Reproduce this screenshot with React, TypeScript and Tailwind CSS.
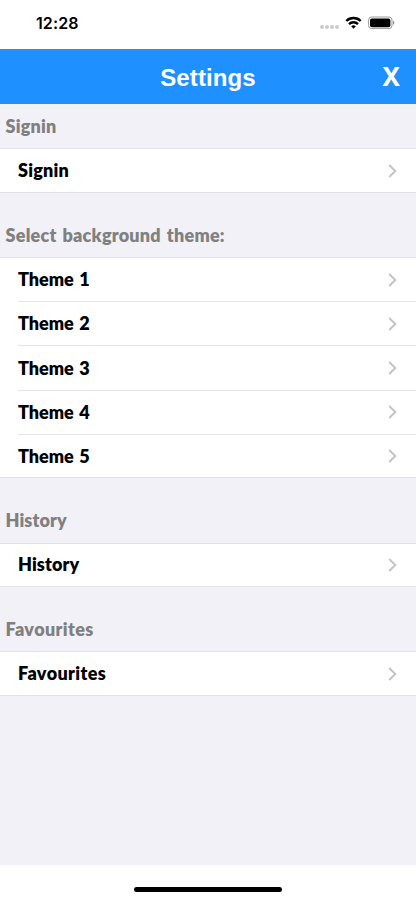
import { clsx } from "clsx";

interface SettingsSection {
  title: string;
  items: string[];
  tracking: string;
  first?: boolean;
}

const sections: SettingsSection[] = [
  { title: "Signin", items: ["Signin"], tracking: "tracking-[0.2px]", first: true },
  {
    title: "Select background theme:",
    items: ["Theme 1", "Theme 2", "Theme 3", "Theme 4", "Theme 5"],
    tracking: "tracking-[0.23px] [word-spacing:1.5px]",
  },
  { title: "History", items: ["History"], tracking: "tracking-[0.1px]" },
  { title: "Favourites", items: ["Favourites"], tracking: "tracking-[0.38px]" },
];

function StatusBar() {
  return (
    <div className="flex h-[49px] shrink-0 items-start justify-between pl-[36px] pr-[21px] pt-[13px]">
      <span className="font-[Inter,sans-serif] text-[16px] leading-[20px] font-semibold tracking-[0.1px] text-black">
        12:28
      </span>
      <div className="flex pt-[3px]">
        {/* No signal */}
        <div className="mt-[9px] flex gap-[1.4px]">
          <span className="size-[3.7px] rounded-full bg-[#cbcbcb]" />
          <span className="size-[3.7px] rounded-full bg-[#cbcbcb]" />
          <span className="size-[3.7px] rounded-full bg-[#cbcbcb]" />
          <span className="size-[3.7px] rounded-full bg-[#cbcbcb]" />
        </div>
        <svg className="ml-[6px] h-[13px] w-[17px]" viewBox="0 0 17 13" fill="none" stroke="black" strokeWidth="2.3">
          <path d="M1.3 5a10.2 10.2 0 0 1 14.4 0" />
          <path d="M4 8.1a6.4 6.4 0 0 1 9 0" />
          <path d="M8.5 12.7 6.2 10.3a3.3 3.3 0 0 1 4.6 0z" fill="black" stroke="none" />
        </svg>
        <svg className="ml-[6px] h-[13px] w-[27px]" viewBox="0 0 27 13">
          <rect x="0.6" y="1" width="23.4" height="11.6" rx="3" fill="none" stroke="#9b9b9b" strokeWidth="1" />
          <rect x="2" y="2.6" width="20.4" height="8.6" rx="1.8" fill="black" />
          <path d="M25 4.8c.9.4 1.3 1.1 1.3 2s-.4 1.6-1.3 2z" fill="#8f8f8f" />
        </svg>
      </div>
    </div>
  );
}

function Header() {
  return (
    <header className="grid h-[55px] shrink-0 grid-cols-[1fr_auto_1fr] items-center bg-[#1e90ff] text-white">
      <span />
      <h1 className="pt-[3px] font-['Liberation_Sans',sans-serif] text-[24px] leading-[28px] font-bold tracking-[0.1px]">
        Settings
      </h1>
      <button className="justify-self-end pr-[16px] pb-[2px] font-['Noto_Sans',sans-serif] text-[26px] leading-[28px] font-bold">
        X
      </button>
    </header>
  );
}

function SettingsRow({ label, last, tracking }: { label: string; last: boolean; tracking: string }) {
  return (
    <li className={clsx("flex pl-[18px]", last ? "h-[42.6px]" : "h-[44.2px]")}>
      <div
        className={clsx(
          "flex flex-1 items-center justify-between pr-[19px]",
          !last && "border-b border-[#e5e5e7]"
        )}
      >
        <span className={clsx("pb-[1px] text-[18px] leading-[24px] font-extrabold text-black", tracking)}>
          {label}
        </span>
        <svg className="h-[14px] w-[9px]" viewBox="0 0 9 14" fill="none" stroke="#c4c4c6" strokeWidth="2">
          <path d="M1.2 1 7.3 7 1.2 13" />
        </svg>
      </div>
    </li>
  );
}

export default function App() {
  return (
    <div className="flex h-[900px] w-full flex-col overflow-hidden bg-white font-[Lato,sans-serif]">
      <StatusBar />
      <Header />
      <main className="flex-1 bg-[#f2f1f7]">
        {sections.map((section) => (
          <section key={section.title}>
            <div
              className={clsx(
                "flex items-end pb-[10.5px] pl-[5.5px]",
                section.first ? "h-[44.3px]" : "h-[64.2px]"
              )}
            >
              <h2 className={clsx("text-[18px] leading-[24px] font-extrabold text-[#808080]", section.tracking)}>
                {section.title}
              </h2>
            </div>
            <ul className="border-y border-[#e2e1e6] bg-white">
              {section.items.map((item, index) => (
                <SettingsRow
                  key={item}
                  label={item}
                  last={index === section.items.length - 1}
                  tracking={section.items.length > 1 ? "[word-spacing:1.3px]" : section.tracking}
                />
              ))}
            </ul>
          </section>
        ))}
      </main>
      <footer className="flex h-[35px] shrink-0 justify-center pt-[21.5px]">
        <div className="h-[5px] w-[148px] rounded-full bg-black" />
      </footer>
    </div>
  );
}
